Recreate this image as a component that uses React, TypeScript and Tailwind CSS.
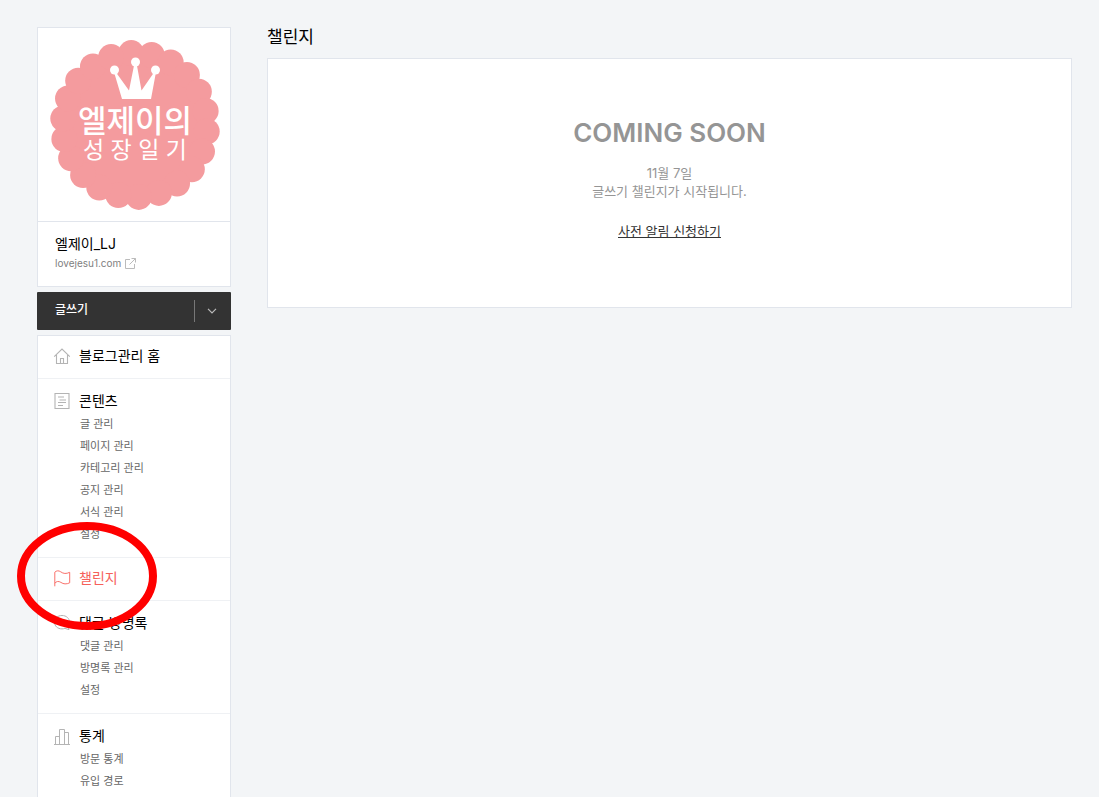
import React from "react";

type Section = {
  label: string;
  icon: React.ReactNode;
  active?: boolean;
  items?: string[];
};

const iconClass = "h-[18px] w-[18px] shrink-0";

function HomeIcon() {
  return (
    <svg className={iconClass} viewBox="0 0 18 18" fill="none" stroke="#b4b4b4" strokeWidth="1.100" aria-hidden="true">
      <path d="M1.200 9.700 9 2l7.800 7.700M3.500 8v8.500h11V8M7.500 16.500v-5h3v5" />
    </svg>
  );
}

function DocumentIcon() {
  return (
    <svg className={iconClass} viewBox="0 0 18 18" fill="none" stroke="#b4b4b4" strokeWidth="1.100" aria-hidden="true">
      <path d="M2 1.500h14v15H2zM5 5h6M6.500 8H13M5 10.500h8M5 13.500h5" />
    </svg>
  );
}

function FlagIcon() {
  return (
    <svg className={iconClass} viewBox="0 0 18 18" fill="none" stroke="#f9716b" aria-hidden="true">
      <path d="M1.800 17.300V3.200C3.500 1.500 5.700 1.400 7.700 2.800c2.700 2 5.500 2.200 9 .5v10.500c-3.300 1.600-6.200 1.400-8.800-.4-2.200-1.500-4.600-1.200-6.100.9" />
    </svg>
  );
}

function CommentIcon() {
  return (
    <svg className={iconClass} viewBox="0 0 18 18" fill="none" stroke="#b4b4b4" aria-hidden="true">
      <path d="M9 1.500C4.600 1.500 1.500 4.400 1.500 8.200S4.600 14.900 9 14.900c1 0 2-.2 2.900-.5l4.100 1.200-1-3.200c1-1.200 1.500-2.600 1.500-4.200C16.500 4.400 13.400 1.500 9 1.500zM6 8.500h6" />
    </svg>
  );
}

function ChartIcon() {
  return (
    <svg className={iconClass} viewBox="0 0 18 18" fill="none" stroke="#b4b4b4" aria-hidden="true">
      <path d="M1 17.500h16M2.500 17.500v-8h4M6.500 17.500v-15h5v15M11.500 5.500h4v12" />
    </svg>
  );
}

const sections: Section[] = [
  { label: "블로그관리 홈", icon: <HomeIcon /> },
  {
    label: "콘텐츠",
    icon: <DocumentIcon />,
    items: ["글 관리", "페이지 관리", "카테고리 관리", "공지 관리", "서식 관리", "설정"],
  },
  { label: "챌린지", icon: <FlagIcon />, active: true },
  { label: "댓글·방명록", icon: <CommentIcon />, items: ["댓글 관리", "방명록 관리", "설정"] },
  { label: "통계", icon: <ChartIcon />, items: ["방문 통계", "유입 경로"] },
];

const scallops = Array.from({ length: 22 }, (_, i) => {
  const angle = ((i * 360) / 22 - 93) * (Math.PI / 180);
  return { cx: 97 + 72 * Math.cos(angle), cy: 97 + 72 * Math.sin(angle) };
});

function BlogLogo() {
  return (
    <svg className="block w-full" viewBox="0 0 192 193" role="img" aria-label="엘제이의 성장일기">
      <g fill="#f49b9e">
        <circle cx="97" cy="97" r="74" />
        {scallops.map((s, i) => (
          <circle key={i} cx={s.cx} cy={s.cy} r="13" />
        ))}
      </g>
      <g fill="#fff">
        <circle cx="76.500" cy="42" r="4.500" />
        <circle cx="97.500" cy="34" r="4.500" />
        <circle cx="117.500" cy="42" r="4.500" />
        <path d="M77 43 91 62.500 96.500 35h2L103.500 62.500 117 43l1 1-5 27H84L76 44z" />
        <text x="97" y="104" textAnchor="middle" fontSize="31" fontWeight="500">
          엘제이의
        </text>
        <text x="97" y="130" textAnchor="middle" fontSize="23" fontWeight="400">
          성 장 일 기
        </text>
      </g>
    </svg>
  );
}

function MenuSection({ section, last }: { section: Section; last: boolean }) {
  return (
    <li className={last ? "relative" : "relative border-b border-[#eff1f4]"}>
      <a
        href="#"
        className={
          "flex items-center gap-2 px-[15px] text-sm leading-5 " +
          (section.items ? "pt-3 " : "pt-[10px] pb-3 ") +
          (section.active ? "text-[#f6605a]" : "text-black")
        }
      >
        {section.icon}
        <span>{section.label}</span>
      </a>
      {section.items && (
        <ul className="pt-0.5 pb-3 pl-[42px]">
          {section.items.map((item) => (
            <li key={item} className="text-[11px] leading-[22px] text-[#666]">
              <a href="#">{item}</a>
            </li>
          ))}
        </ul>
      )}
      {section.active && (
        <svg
          className="pointer-events-none absolute -top-9 -left-[21px] z-10 h-[108px] w-[140px]"
          viewBox="0 0 140 108"
          fill="none"
          aria-hidden="true"
        >
          <ellipse cx="70" cy="54" rx="66" ry="50" stroke="#ff0000" strokeWidth="8" />
        </svg>
      )}
    </li>
  );
}

export default function App() {
  return (
    <div className="flex min-h-screen items-stretch gap-9 bg-[#f3f5f7] pt-[27px] pr-[27px] pl-[37px] font-['Inter','Noto_Sans_CJK_KR',sans-serif]">
      <aside className="flex w-[194px] shrink-0 flex-col gap-[5px]">
        <section className="border border-[#e1e5ec] bg-white">
          <BlogLogo />
          <div className="border-t border-[#e1e5ec] px-[17px] pt-3 pb-[14px]">
            <h2 className="text-sm leading-5 text-black">엘제이_LJ</h2>
            <a href="#" className="flex items-center gap-1 text-[10px] leading-[18px] text-[#808080]">
              lovejesu1.com
              <svg className="h-[11px] w-[11px]" viewBox="0 0 11 11" fill="none" stroke="#bbb" aria-hidden="true">
                <path d="M5 1.500H.5v9h9V6M6.500.5h4v4M10.500.5 4.500 6.500" />
              </svg>
            </a>
          </div>
        </section>

        <div className="flex h-[38px] items-center rounded-[1px] bg-[#333] text-white">
          <button type="button" className="h-full flex-1 pb-0.5 pl-[18px] text-left text-xs font-medium">
            글쓰기
          </button>
          <span className="h-[22px] w-px bg-[#777]" />
          <button type="button" aria-label="글쓰기 메뉴" className="flex h-full w-9 items-center justify-center pr-0.5">
            <svg className="h-[6px] w-[10px]" viewBox="0 0 10 6" fill="none" stroke="#bbb" strokeWidth="1.200" aria-hidden="true">
              <path d="m1 .8 4 4 4-4" />
            </svg>
          </button>
        </div>

        <nav className="flex-1 border border-b-0 border-[#e1e5ec] bg-white">
          <ul>
            {sections.map((section, i) => (
              <MenuSection key={section.label} section={section} last={i === sections.length - 1} />
            ))}
          </ul>
        </nav>
      </aside>

      <main className="min-w-0 flex-1">
        <h1 className="text-[17px] leading-5 text-black">챌린지</h1>
        <section className="mt-[11px] flex flex-col items-center border border-[#e1e5ec] bg-white pt-14 pb-[67px] text-center">
          <p className="text-[26px] leading-9 font-semibold text-[#959595]">COMING SOON</p>
          <p className="mt-[13px] text-[13px] leading-[18px] text-[#959595]">
            11월 7일
            <br />
            글쓰기 챌린지가 시작됩니다.
          </p>
          <a href="#" className="mt-[22px] text-[13px] leading-[18px] text-[#333] underline">
            사전 알림 신청하기
          </a>
        </section>
      </main>
    </div>
  );
}
